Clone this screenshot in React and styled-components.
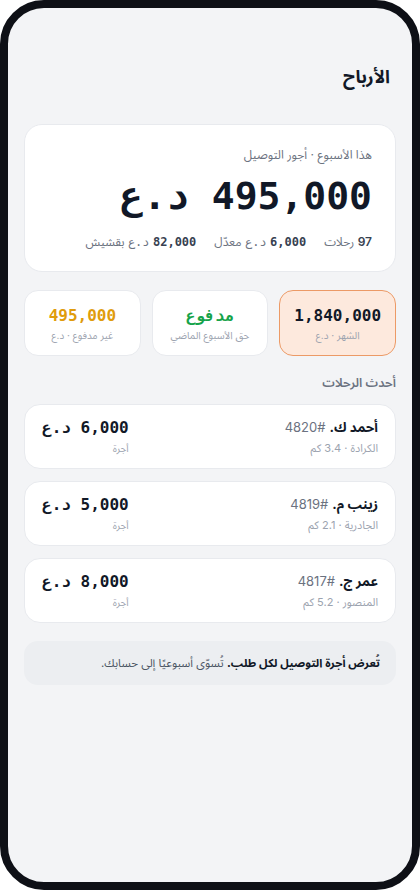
import React from "react";
import styled, { createGlobalStyle } from "styled-components";

const GlobalStyle = createGlobalStyle`
  html, body {
    margin: 0;
    padding: 0;
    background: #ffffff;
  }
  * {
    box-sizing: border-box;
  }
`;

const SANS = `"Inter", "Noto Sans Arabic", "Noto Sans", "DejaVu Sans", sans-serif`;
const MONO = `"DejaVu Sans Mono", "Liberation Mono", monospace`;

const trips = [
  { name: "أحمد ك.", id: "#4820", area: "الكرادة", km: "3.4", amount: "6,000" },
  { name: "زينب م.", id: "#4819", area: "الجادرية", km: "2.1", amount: "5,000" },
  { name: "عمر ج.", id: "#4817", area: "المنصور", km: "5.2", amount: "8,000" },
];

const App = () => {
  return (
    <>
      <GlobalStyle />
      <Phone>
        <Screen dir="rtl">
          <Title>الأرباح</Title>

          <HeroCard>
            <HeroLabel>هذا الأسبوع · أجور التوصيل</HeroLabel>
            <HeroAmount>495,000 د.ع</HeroAmount>
            <MetaRow>
              <MetaItem>
                <MetaPlain>97</MetaPlain> رحلات
              </MetaItem>
              <MetaItem>
                <MetaNum>6,000</MetaNum> <MetaUnit>د.ع</MetaUnit> معدّل
              </MetaItem>
              <MetaItem>
                <MetaNum>82,000</MetaNum> <MetaUnit>د.ع</MetaUnit> بقشيش
              </MetaItem>
            </MetaRow>
          </HeroCard>

          <StatGrid>
            <StatCard $active>
              <StatValue>1,840,000</StatValue>
              <StatLabel>الشهر · د.ع</StatLabel>
            </StatCard>
            <StatCard>
              <StatValue $color="#16a34a">مدفوع</StatValue>
              <StatLabel>حق الأسبوع الماضي</StatLabel>
            </StatCard>
            <StatCard>
              <StatValue $color="#e09c0c">495,000</StatValue>
              <StatLabel>غير مدفوع · د.ع</StatLabel>
            </StatCard>
          </StatGrid>

          <SectionLabel>أحدث الرحلات</SectionLabel>

          <TripList>
            {trips.map((t) => (
              <TripCard key={t.id}>
                <TripInfo>
                  <TripName>
                    {t.name}
                    <TripId>{t.id}</TripId>
                  </TripName>
                  <TripSub>
                    {t.area} · {t.km} كم
                  </TripSub>
                </TripInfo>
                <TripFare>
                  <FareValue>{t.amount} د.ع</FareValue>
                  <FareLabel>أجرة</FareLabel>
                </TripFare>
              </TripCard>
            ))}
          </TripList>

          <Note>
            <strong>تُعرض أجرة التوصيل لكل طلب.</strong> تُسوّى أسبوعيًا إلى
            حسابك.
          </Note>
        </Screen>
      </Phone>
    </>
  );
};

const Phone = styled.div`
  width: 420px;
  height: 890px;
  border: 8px solid #0e1016;
  border-radius: 44px;
  background: #f3f4f6;
  overflow: hidden;
`;

const Screen = styled.div`
  display: flex;
  flex-direction: column;
  padding: 56px 16px 0;
  font-family: ${SANS};
  color: #111827;
`;

const Title = styled.h1`
  margin: 0 6px 34px 0;
  font-size: 18px;
  line-height: 26px;
  font-weight: 700;
  color: #111827;
`;

const HeroCard = styled.section`
  background: #ffffff;
  border: 1px solid #e8eaee;
  border-radius: 18px;
  padding: 20px 23px 19px;
`;

const HeroLabel = styled.div`
  font-size: 12px;
  line-height: 20px;
  color: #6b7280;
`;

const HeroAmount = styled.div`
  margin-top: 8px;
  font-family: ${MONO};
  font-size: 38px;
  line-height: 46px;
  font-weight: 700;
  color: #111827;
`;

const MetaRow = styled.div`
  display: flex;
  gap: 18px;
  margin-top: 13px;
  font-size: 12px;
  line-height: 20px;
  color: #6b7280;
`;

const MetaItem = styled.span`
  white-space: nowrap;
`;

const MetaPlain = styled.span`
  color: #374151;
  font-weight: 600;
`;

const MetaNum = styled.span`
  font-family: ${MONO};
  font-weight: 700;
  color: #374151;
`;

const MetaUnit = styled.span`
  font-family: ${MONO};
  color: #6b7280;
`;

const StatGrid = styled.div`
  display: grid;
  grid-template-columns: repeat(3, 1fr);
  gap: 11px;
  margin-top: 18px;
`;

const StatCard = styled.div`
  display: flex;
  flex-direction: column;
  align-items: center;
  justify-content: center;
  gap: 1px;
  height: 66px;
  padding-top: 3px;
  border-radius: 14px;
  background: ${(p) => (p.$active ? "#fde9dd" : "#ffffff")};
  border: ${(p) => (p.$active ? "1.5px solid #ec9a66" : "1px solid #e8eaee")};
`;

const StatValue = styled.div`
  font-family: ${MONO};
  font-size: 16px;
  line-height: 20px;
  font-weight: 700;
  color: ${(p) => p.$color || "#111827"};
`;

const StatLabel = styled.div`
  font-size: 10px;
  line-height: 16px;
  color: #9ca3af;
`;

const SectionLabel = styled.div`
  margin: 17px 0 0;
  font-size: 12.5px;
  line-height: 20px;
  font-weight: 600;
  color: #6b7280;
`;

const TripList = styled.div`
  display: flex;
  flex-direction: column;
  gap: 12px;
  margin-top: 11px;
`;

const TripCard = styled.div`
  display: flex;
  justify-content: space-between;
  align-items: center;
  height: 65px;
  padding: 0 17px;
  background: #ffffff;
  border: 1px solid #e8eaee;
  border-radius: 16px;
`;

const TripInfo = styled.div`
  display: flex;
  flex-direction: column;
  gap: 2px;
`;

const TripName = styled.div`
  font-size: 13.5px;
  line-height: 20px;
  font-weight: 700;
  color: #111827;
`;

const TripId = styled.span`
  margin-inline-start: 4px;
  font-size: 13px;
  font-weight: 400;
  color: #6b7280;
`;

const TripSub = styled.div`
  font-size: 11px;
  line-height: 18px;
  color: #9ca3af;
`;

const TripFare = styled.div`
  display: flex;
  flex-direction: column;
  gap: 2px;
`;

const FareValue = styled.div`
  font-family: ${MONO};
  font-size: 16px;
  line-height: 20px;
  font-weight: 700;
  color: #111827;
`;

const FareLabel = styled.div`
  font-size: 10px;
  line-height: 16px;
  color: #9ca3af;
`;

const Note = styled.p`
  margin: 18px 0 0;
  padding: 13px 16px;
  background: #eceef1;
  border-radius: 14px;
  font-size: 11.5px;
  line-height: 18px;
  color: #4b5563;

  strong {
    font-weight: 700;
    color: #111827;
  }
`;

export default App;
